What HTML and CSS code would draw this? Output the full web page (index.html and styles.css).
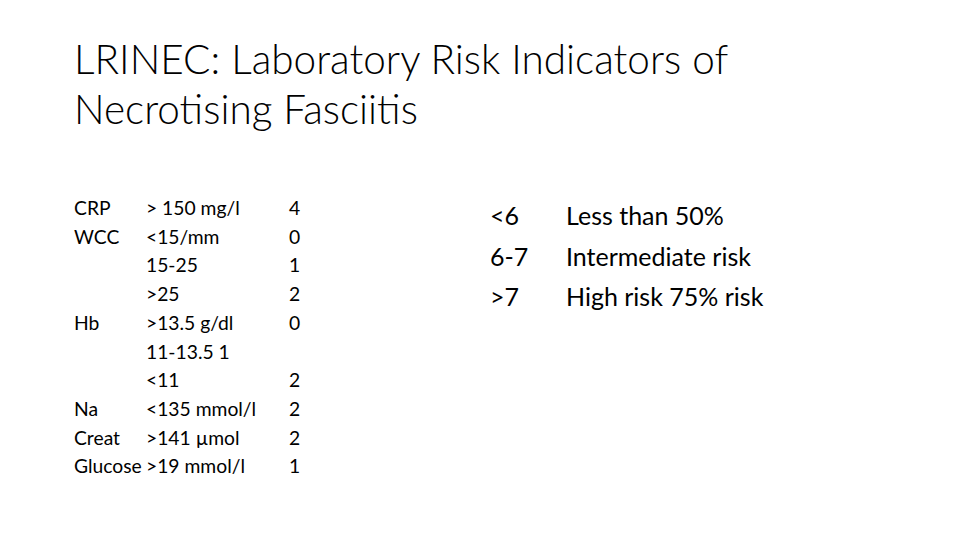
FILE: index.html
```html
<!DOCTYPE html>
<html>
<head>
<meta charset="utf-8">
<link rel="stylesheet" href="styles.css">
</head>
<body>
<div class="slide">
  <h1 class="title">LRINEC: Laboratory Risk Indicators of<br>Necrotising Fasciitis</h1>
  <div class="content">
    <div class="scores">
      <div class="row"><span class="cell"><span class="label">CRP</span><span>&gt; 150 mg/l</span></span><span>4</span></div>
      <div class="row"><span class="cell"><span class="label">WCC</span><span>&lt;15/mm</span></span><span>0</span></div>
      <div class="row"><span class="cell"><span class="label"></span><span>15-25</span></span><span>1</span></div>
      <div class="row"><span class="cell"><span class="label"></span><span>&gt;25</span></span><span>2</span></div>
      <div class="row"><span class="cell"><span class="label">Hb</span><span>&gt;13.5 g/dl</span></span><span>0</span></div>
      <div class="row"><span class="cell"><span class="label"></span><span>11-13.5 1</span></span><span></span></div>
      <div class="row"><span class="cell"><span class="label"></span><span>&lt;11</span></span><span>2</span></div>
      <div class="row"><span class="cell"><span class="label">Na</span><span>&lt;135 mmol/l</span></span><span>2</span></div>
      <div class="row"><span class="cell"><span class="label">Creat</span><span>&gt;141 µmol</span></span><span>2</span></div>
      <div class="row"><span class="cell"><span class="label">Glucose</span><span>&gt;19 mmol/l</span></span><span>1</span></div>
    </div>
    <div class="risk">
      <div class="risk-row"><span class="range">&lt;6</span><span>Less than 50%</span></div>
      <div class="risk-row"><span class="range">6-7</span><span>Intermediate risk</span></div>
      <div class="risk-row"><span class="range">&gt;7</span><span>High risk 75% risk</span></div>
    </div>
  </div>
</div>
</body>
</html>
```
FILE: styles.css
```css
html, body {
  margin: 0;
  padding: 0;
  background: #ffffff;
}
.slide {
  width: 960px;
  height: 540px;
  box-sizing: border-box;
  padding: 34px 0 0 74px;
  font-family: Lato, "Open Sans", sans-serif;
  color: #000000;
  overflow: hidden;
}
.title {
  margin: 0;
  font-family: Lato, sans-serif;
  font-weight: 300;
  font-size: 40.5px;
  line-height: 50px;
}
.content {
  display: flex;
  margin-top: 60px;
}
.scores {
  width: 416px;
  font-size: 19.3px;
  line-height: 28.7px;
}
.row {
  display: grid;
  grid-template-columns: 215px auto;
  white-space: nowrap;
}
.label {
  display: inline-block;
  min-width: 72px;
}
.risk {
  font-size: 25px;
  line-height: 40.5px;
  margin-top: 1px;
}
.risk-row {
  display: flex;
  white-space: nowrap;
}
.range {
  width: 76px;
}
```
